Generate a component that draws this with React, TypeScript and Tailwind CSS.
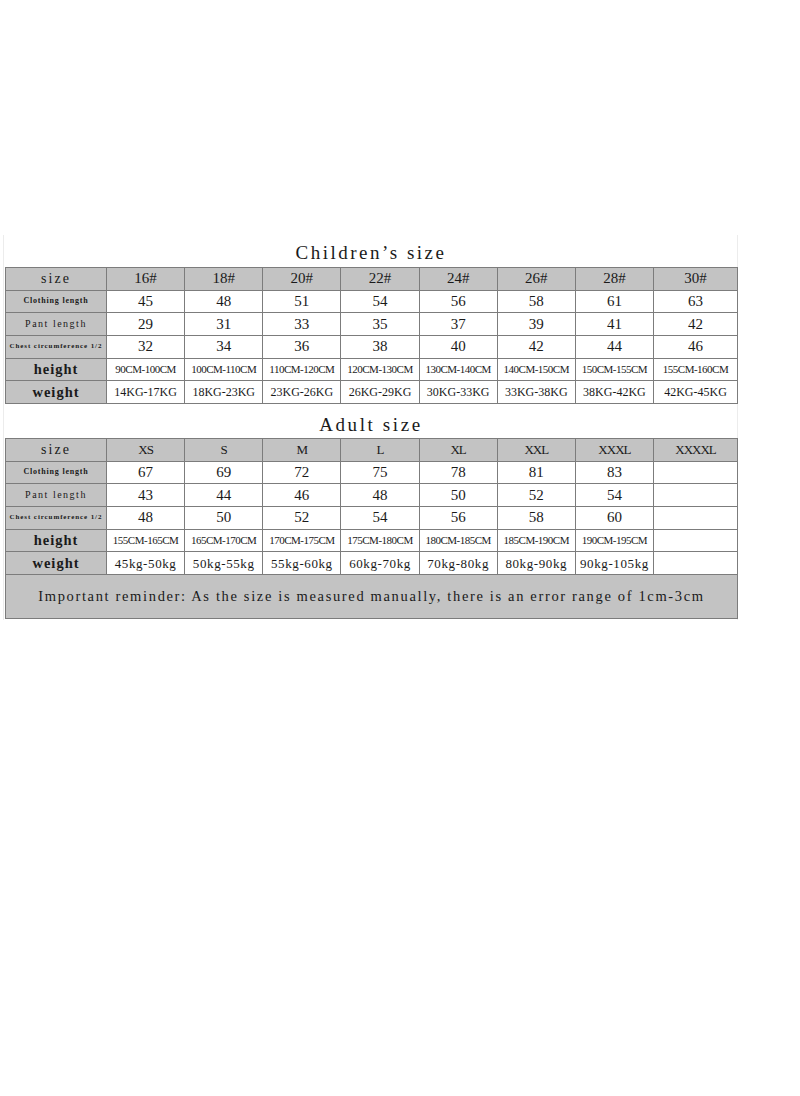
// 尺码表：儿童尺码 + 成人尺码，两张灰底表头表格
import React from "react";

type Row = { label: string; cells: string[] };

interface SizeTable {
  title: string;
  head: string[];
  rows: Row[];
}

const children: SizeTable = {
  title: "Children’s size",
  head: ["16#", "18#", "20#", "22#", "24#", "26#", "28#", "30#"],
  rows: [
    { label: "Clothing length", cells: ["45", "48", "51", "54", "56", "58", "61", "63"] },
    { label: "Pant length", cells: ["29", "31", "33", "35", "37", "39", "41", "42"] },
    { label: "Chest circumference 1/2", cells: ["32", "34", "36", "38", "40", "42", "44", "46"] },
    {
      label: "height",
      cells: [
        "90CM-100CM",
        "100CM-110CM",
        "110CM-120CM",
        "120CM-130CM",
        "130CM-140CM",
        "140CM-150CM",
        "150CM-155CM",
        "155CM-160CM",
      ],
    },
    {
      label: "weight",
      cells: [
        "14KG-17KG",
        "18KG-23KG",
        "23KG-26KG",
        "26KG-29KG",
        "30KG-33KG",
        "33KG-38KG",
        "38KG-42KG",
        "42KG-45KG",
      ],
    },
  ],
};

const adult: SizeTable = {
  title: "Adult size",
  head: ["XS", "S", "M", "L", "XL", "XXL", "XXXL", "XXXXL"],
  rows: [
    { label: "Clothing length", cells: ["67", "69", "72", "75", "78", "81", "83", ""] },
    { label: "Pant length", cells: ["43", "44", "46", "48", "50", "52", "54", ""] },
    { label: "Chest circumference 1/2", cells: ["48", "50", "52", "54", "56", "58", "60", ""] },
    {
      label: "height",
      cells: [
        "155CM-165CM",
        "165CM-170CM",
        "170CM-175CM",
        "175CM-180CM",
        "180CM-185CM",
        "185CM-190CM",
        "190CM-195CM",
        "",
      ],
    },
    {
      label: "weight",
      cells: [
        "45kg-50kg",
        "50kg-55kg",
        "55kg-60kg",
        "60kg-70kg",
        "70kg-80kg",
        "80kg-90kg",
        "90kg-105kg",
        "",
      ],
    },
  ],
};

// 原图是宋体的西文字形，用 Liberation Serif 配字距模拟等宽效果
const serif = "font-['Liberation_Serif','Noto_Sans_CJK_SC',serif]";

function labelClass(label: string): string {
  if (label === "Clothing length") return "text-[8px] font-bold tracking-[0.8px]";
  if (label === "Pant length") return "text-[10px] font-medium tracking-[1.5px]";
  if (label.startsWith("Chest")) return "text-[7px] font-bold tracking-[0.9px]";
  return "text-[14.5px] font-bold tracking-[1px]";
}

function headClass(h: string): string {
  if (/^[0-9#]+$/.test(h)) return "text-[15px]";
  return "text-[13px] tracking-[-1px]";
}

function valueClass(v: string): string {
  if (/^[0-9]+$/.test(v)) return "text-[15px]";
  if (v.includes("CM")) return "text-[11px] tracking-[-0.5px]";
  if (v.includes("KG")) return "text-[12px]";
  return "text-[13px] tracking-[0.6px]";
}

const cell = "border border-[#7c7c7c] text-center p-0 leading-none whitespace-nowrap";

function Table({
  data,
  titleBox,
  titleText,
  reminder,
}: {
  data: SizeTable;
  titleBox: string;
  titleText: string;
  reminder?: boolean;
}) {
  return (
    <div>
      <div className={`${titleBox} flex items-end justify-center`}>
        <span className={`${serif} ${titleText} text-[19px] leading-none text-[#1a1a1a]`}>{data.title}</span>
      </div>
      <table className={`${serif} table-fixed border-collapse w-[733px] text-[#1a1a1a]`}>
        <colgroup>
          <col className="w-[101px]" />
          {data.head.slice(0, 7).map((h) => (
            <col key={h} />
          ))}
          <col className="w-[84px]" />
        </colgroup>
        <tbody>
          <tr className="h-[22.67px] bg-[#c3c3c3]">
            <td className={`${cell} text-[14px] tracking-[2px]`}>size</td>
            {data.head.map((h) => (
              <td key={h} className={`${cell} ${headClass(h)}`}>
                {h}
              </td>
            ))}
          </tr>
          {data.rows.map((r) => (
            <tr key={r.label} className="h-[22.67px]">
              <td className={`${cell} ${labelClass(r.label)} bg-[#c3c3c3]`}>{r.label}</td>
              {r.cells.map((c, i) => (
                <td key={i} className={`${cell} ${valueClass(c)} bg-white`}>
                  {c}
                </td>
              ))}
            </tr>
          ))}
          {reminder && (
            <tr className="h-[44px] bg-[#c3c3c3]">
              <td colSpan={9} className={`${cell} text-[14.5px] tracking-[1.65px]`}>
                Important reminder: As the size is measured manually, there is an error range of 1cm-3cm
              </td>
            </tr>
          )}
        </tbody>
      </table>
    </div>
  );
}

export default function App() {
  return (
    <div className="w-[800px] h-[1096px] bg-white pt-[235px] pl-[3px]">
      <div className="w-[735px] h-[385px] border-x border-[#ececec] pl-px">
        <Table data={children} titleBox="h-[32px] pb-[5px]" titleText="tracking-[2.5px]" />
        <Table data={adult} titleBox="h-[34px] pb-[4px]" titleText="tracking-[2.6px]" reminder />
      </div>
    </div>
  );
}
